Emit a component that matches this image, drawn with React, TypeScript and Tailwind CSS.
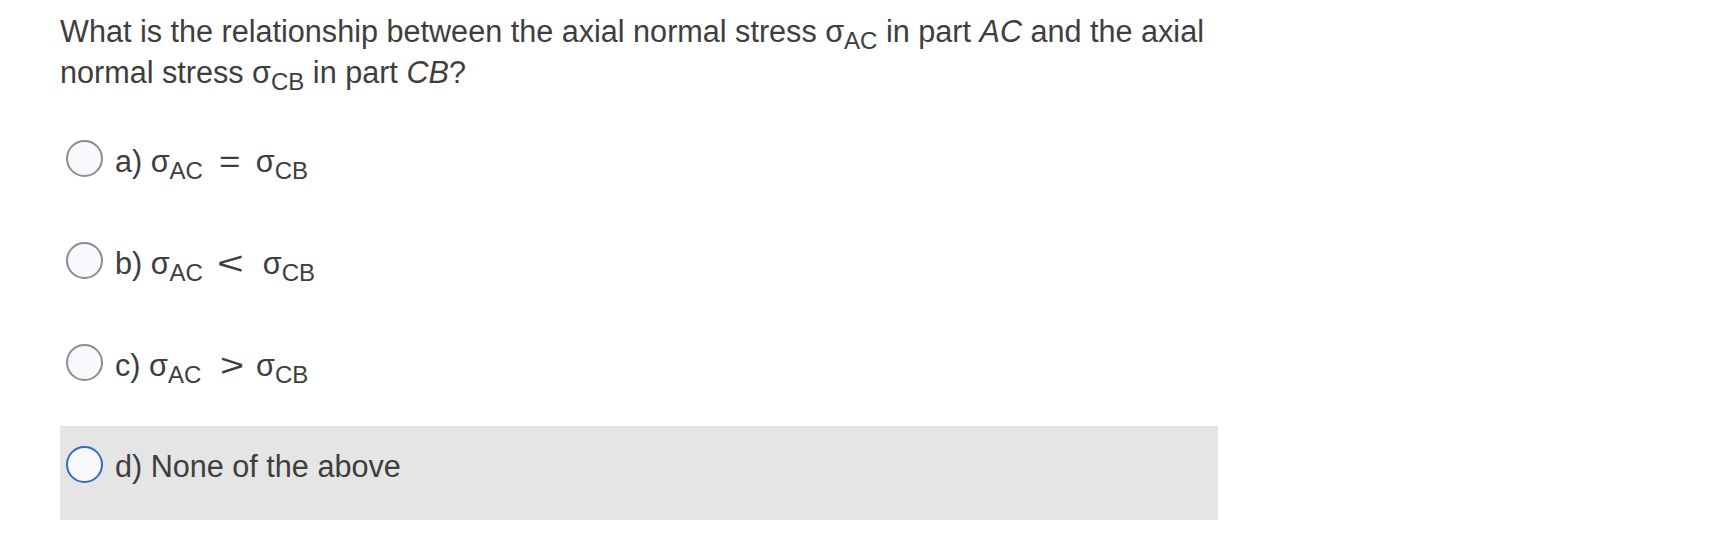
import type { ReactNode } from 'react';

type Option = {
  key: string;
  label: ReactNode;
};

function Sig({ sub }: { sub: string }) {
  return (
    <span className="whitespace-nowrap">
      σ<span className="relative top-[7px] text-[24px]">{sub}</span>
    </span>
  );
}

function Relation({ op, opClass }: { op: string; opClass: string }) {
  return (
    <span className="inline-flex items-baseline">
      <Sig sub="AC" />
      <span className={`inline-block origin-left ${opClass}`}>{op}</span>
      <Sig sub="CB" />
    </span>
  );
}

const options: Option[] = [
  { key: 'a', label: <Relation op="=" opClass="ml-[16px] mr-[19px] scale-x-[1.2]" /> },
  { key: 'b', label: <Relation op="<" opClass="ml-[14px] mr-[28px] scale-x-[1.5]" /> },
  { key: 'c', label: <Relation op=">" opClass="ml-[19px] mr-[18px] scale-x-[1.35]" /> },
];

function Radio({ active = false }: { active?: boolean }) {
  return (
    <span
      className={`block shrink-0 w-[37px] h-[37px] rounded-full border-2 bg-[#f8f9fd] ${
        active ? 'border-[#2e6fc4]' : 'border-[#8d8d8d]'
      }`}
    />
  );
}

export default function App() {
  return (
    <div className="min-h-[552px] bg-white font-['Liberation_Sans',Arial,sans-serif] text-[#3e3e3e]">
      <div className="pl-[60px] pt-[12px]">
        <div className="w-[1158px]">
          {/* Question */}
          <p className="text-[30.6px] leading-[38px]">
            What is the relationship between the axial normal stress <Sig sub="AC" /> in part{' '}
            <i>AC</i> and the axial
            <br />
            normal stress <Sig sub="CB" /> in part <i>CB</i>?
          </p>

          {/* Options */}
          <div className="mt-[26px] flex flex-col gap-[8px]">
            {options.map((o) => (
              <div key={o.key} className="flex items-start h-[94px] pt-[20px] pl-[6px]">
                <Radio />
                <div className="ml-[12px] mt-[3px] text-[30.6px] leading-[37px] whitespace-nowrap">
                  {o.key}) {o.label}
                </div>
              </div>
            ))}
            <div className="flex items-start h-[94px] pt-[20px] pl-[6px] bg-[#e5e5e5]">
              <Radio active />
              <div className="ml-[12px] mt-[2px] text-[30.6px] leading-[37px]">d) None of the above</div>
            </div>
          </div>
        </div>
      </div>
    </div>
  );
}
